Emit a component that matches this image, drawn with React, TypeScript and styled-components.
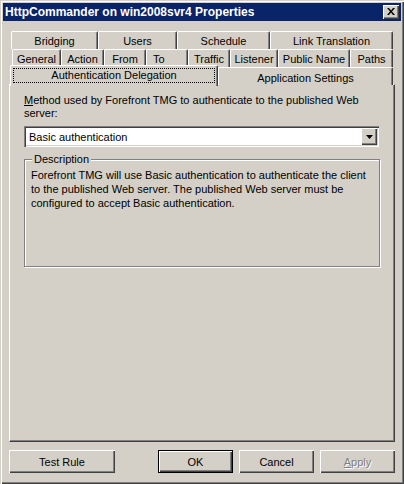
import React from "react";
import styled, { createGlobalStyle, css } from "styled-components";

const face = "#d4d0c8";
const shadow = "#808080";
const darkShadow = "#404040";

const GlobalStyle = createGlobalStyle`
  html, body {
    margin: 0;
    padding: 0;
    background: ${face};
  }
  body {
    font-family: "Liberation Sans", Arial, sans-serif;
    font-size: 11px;
    color: #000;
  }
`;

interface TabDef {
  label: string;
  width: number;
  indent?: number;
}

const rowOne: TabDef[] = [
  { label: "Bridging", width: 87 },
  { label: "Users", width: 79 },
  { label: "Schedule", width: 93 },
  { label: "Link Translation", width: 123 },
];

const rowTwo: TabDef[] = [
  { label: "General", width: 49 },
  { label: "Action", width: 43 },
  { label: "From", width: 42 },
  { label: "To", width: 42, indent: 6 },
  { label: "Traffic", width: 42 },
  { label: "Listener", width: 48 },
  { label: "Public Name", width: 72 },
  { label: "Paths", width: 43 },
];

const App = () => {
  return (
    <>
      <GlobalStyle />
      <Window>
        <TitleBar>
          <TitleText>HttpCommander on win2008svr4 Properties</TitleText>
          <CloseButton aria-label="Close">
            <svg width="8" height="7" viewBox="0 0 8 7">
              <path
                d="M0 0h2l2 2.5L6 0h2L5 3.5 8 7H6L4 4.5 2 7H0l3-3.5z"
                fill="#000"
              />
            </svg>
          </CloseButton>
        </TitleBar>

        <Content>
          <TabStrip>
            <TabRow $offset={2}>
              {rowOne.map((t) => (
                <Tab key={t.label} $width={t.width}>
                  {t.label}
                </Tab>
              ))}
            </TabRow>
            <TabRow $offset={3}>
              {rowTwo.map((t) => (
                <Tab key={t.label} $width={t.width} $indent={t.indent}>
                  {t.label}
                </Tab>
              ))}
            </TabRow>
            <TabRow $offset={1}>
              <Tab $width={208} $selected>
                <FocusRect>Authentication Delegation</FocusRect>
              </Tab>
              <Tab $width={175} $lower>
                Application Settings
              </Tab>
            </TabRow>
          </TabStrip>

          <Panel>
            <FieldLabel>
              Method used by Forefront TMG to authenticate to the published Web
              server:
            </FieldLabel>

            <Combo>
              <ComboValue>Basic authentication</ComboValue>
              <ComboArrow>
                <svg width="7" height="4" viewBox="0 0 7 4">
                  <path d="M0 0h7L3.5 4z" fill="#000" />
                </svg>
              </ComboArrow>
            </Combo>

            <GroupBox>
              <GroupLegend>Description</GroupLegend>
              <GroupText>
                Forefront TMG will use Basic authentication to authenticate the
                client to the published Web server. The published Web server must
                be configured to accept Basic authentication.
              </GroupText>
            </GroupBox>
          </Panel>

          <ButtonRow>
            <PushButton $width={106}>Test Rule</PushButton>
            <Spacer />
            <PushButton $width={75} $default>
              OK
            </PushButton>
            <PushButton $width={75}>Cancel</PushButton>
            <PushButton $width={75} disabled>
              <ButtonCaption>Apply</ButtonCaption>
            </PushButton>
          </ButtonRow>
        </Content>
      </Window>
    </>
  );
};

const raised = css`
  box-shadow: inset 1px 1px 0 #fff, inset -1px -1px 0 ${darkShadow},
    inset -2px -2px 0 ${shadow};
`;

const Window = styled.div`
  width: 404px;
  height: 484px;
  box-sizing: border-box;
  padding: 3px;
  background: ${face};
  box-shadow: inset 1px 1px 0 ${face}, inset 2px 2px 0 #fff,
    inset -1px -1px 0 ${darkShadow}, inset -2px -2px 0 ${shadow};
  display: flex;
  flex-direction: column;
`;

const TitleBar = styled.div`
  height: 18px;
  background: #0a246a;
  display: flex;
  align-items: center;
  justify-content: space-between;
  padding: 0 2px 0 2px;
`;

const TitleText = styled.span`
  color: #fff;
  font-weight: bold;
  font-size: 12px;
  white-space: nowrap;
`;

const CloseButton = styled.div`
  width: 16px;
  height: 14px;
  background: ${face};
  ${raised};
  display: flex;
  align-items: center;
  justify-content: center;
  padding-right: 1px;
  padding-bottom: 1px;
  box-sizing: border-box;
`;

const Content = styled.div`
  flex: 1;
  display: flex;
  flex-direction: column;
  padding: 10px 6px 0 6px;
`;

const TabStrip = styled.div`
  display: flex;
  flex-direction: column;
  position: relative;
  z-index: 1;
`;

const TabRow = styled.div<{ $offset: number }>`
  display: flex;
  height: 18px;
  padding-left: ${(p) => p.$offset}px;
`;

const Tab = styled.div<{
  $width: number;
  $selected?: boolean;
  $lower?: boolean;
  $indent?: number;
}>`
  width: ${(p) => p.$width}px;
  box-sizing: border-box;
  flex-shrink: 0;
  height: 18px;
  display: flex;
  align-items: center;
  justify-content: ${(p) => (p.$indent ? "flex-start" : "center")};
  padding-left: ${(p) => p.$indent ?? 0}px;
  white-space: nowrap;
  background: ${face};
  border-top: 1px solid #fff;
  border-left: 1px solid #fff;
  border-right: 1px solid ${darkShadow};
  box-shadow: inset -1px 0 0 ${shadow};
  border-top-left-radius: 2px;
  border-top-right-radius: 2px;
  padding-top: 1px;
  ${(p) =>
    p.$selected &&
    css`
      height: 21px;
      margin-top: -2px;
      padding: 2px 2px 3px 2px;
      align-items: stretch;
    `}
  ${(p) =>
    p.$lower &&
    css`
      padding-top: 3px;
    `}
`;

const FocusRect = styled.div`
  flex: 1;
  display: flex;
  align-items: center;
  justify-content: center;
  outline: 1px dotted #000;
  outline-offset: -1px;
  padding-bottom: 1px;
`;

const Panel = styled.div`
  height: 358px;
  box-sizing: border-box;
  margin-top: -1px;
  border-top: 1px solid #fff;
  border-left: 1px solid #fff;
  border-right: 1px solid ${darkShadow};
  border-bottom: 1px solid ${darkShadow};
  box-shadow: inset -1px -1px 0 ${shadow};
  padding: 9px 15px 0 14px;
  display: flex;
  flex-direction: column;
`;

const FieldLabel = styled.div`
  line-height: 13px;
  width: 340px;
  &::first-letter {
    text-decoration: underline;
  }
`;

const ButtonCaption = styled.span`
  display: inline-block;
  &::first-letter {
    text-decoration: underline;
  }
`;

const Combo = styled.div`
  margin-top: 6px;
  width: 355px;
  height: 21px;
  box-sizing: border-box;
  background: #fff;
  box-shadow: inset 1px 1px 0 ${shadow}, inset 2px 2px 0 ${darkShadow},
    inset -1px -1px 0 #fff, inset -2px -2px 0 ${face};
  display: flex;
  align-items: center;
  padding: 2px;
`;

const ComboValue = styled.span`
  flex: 1;
  padding-left: 3px;
`;

const ComboArrow = styled.div`
  width: 16px;
  height: 17px;
  box-sizing: border-box;
  background: ${face};
  ${raised};
  display: flex;
  align-items: center;
  justify-content: center;
  padding-top: 1px;
`;

const GroupBox = styled.div`
  margin-top: 12px;
  width: 356px;
  height: 108px;
  box-sizing: border-box;
  border: 1px solid ${shadow};
  box-shadow: inset 1px 1px 0 #fff, 1px 1px 0 #fff;
  position: relative;
  padding: 8px 6px 0 6px;
`;

const GroupLegend = styled.span`
  position: absolute;
  top: -7px;
  left: 7px;
  padding: 0 2px;
  background: ${face};
  line-height: 13px;
`;

const GroupText = styled.p`
  margin: 0;
  line-height: 14px;
`;

const ButtonRow = styled.div`
  display: flex;
  gap: 6px;
  margin-top: 8px;
  height: 23px;
`;

const Spacer = styled.div`
  flex: 1;
`;

const PushButton = styled.button<{ $width: number; $default?: boolean }>`
  width: ${(p) => p.$width}px;
  height: 23px;
  box-sizing: border-box;
  border: none;
  background: ${face};
  font-family: "Liberation Sans", Arial, sans-serif;
  font-size: 11px;
  color: #000;
  padding: 0;
  ${raised};
  ${(p) =>
    p.$default &&
    css`
      box-shadow: inset 0 0 0 1px #000, inset 2px 2px 0 #fff,
        inset -2px -2px 0 ${darkShadow}, inset -3px -3px 0 ${shadow};
    `}
  &:disabled {
    color: ${shadow};
    text-shadow: 1px 1px 0 #fff;
  }
`;

export default App;
